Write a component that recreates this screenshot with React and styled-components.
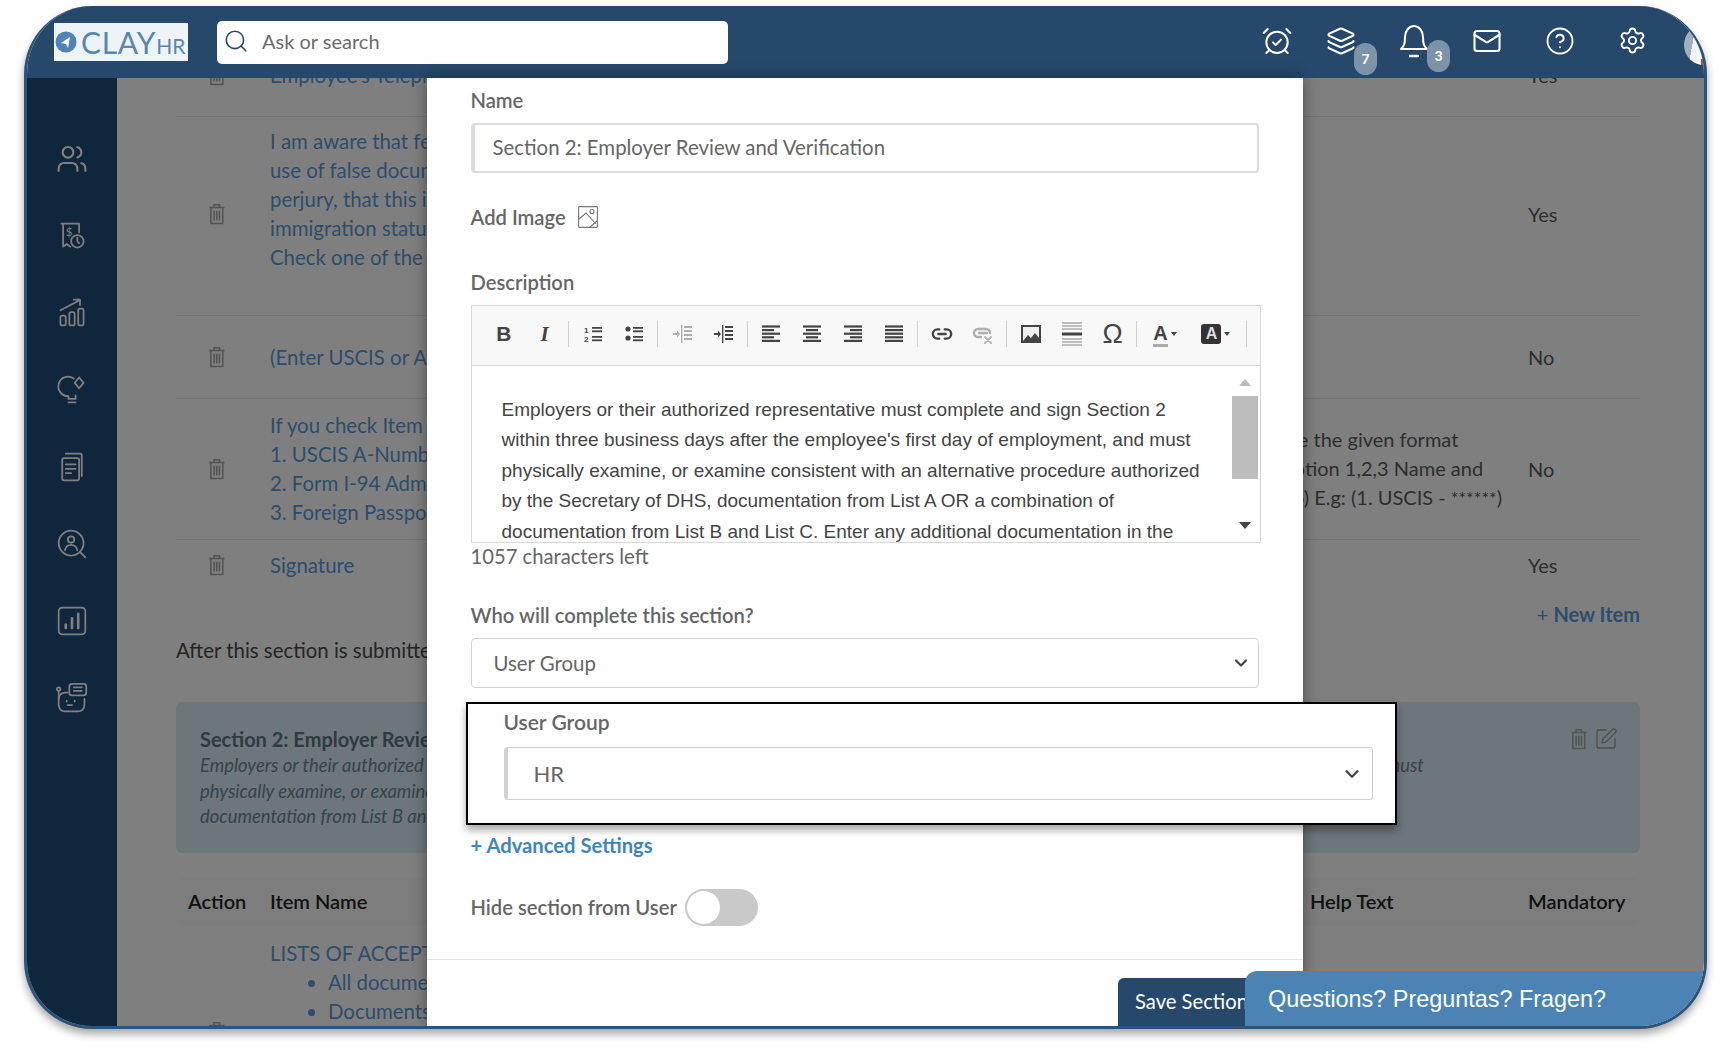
import React from "react"
import styled, { createGlobalStyle } from "styled-components"
import {
  AlarmClockCheck,
  ChevronDown,
  CircleHelp,
  Layers,
  Link2,
  Mail,
  Search,
  Settings,
  SquarePen,
  Users,
} from "lucide-react"

const GlobalStyle = createGlobalStyle`
  html, body {
    margin: 0;
    padding: 0;
    height: 100%;
    background: #fff;
    font-family: "Lato", "Open Sans", sans-serif;
  }
  * { box-sizing: border-box; }
`

const Page = styled.div`
  width: 1730px;
  height: 1046px;
  padding: 6px 23px 17px 24px;
  overflow: hidden;
`

const Frame = styled.div`
  height: 100%;
  display: flex;
  flex-direction: column;
  border: 3px solid #2d5379;
  border-top-width: 0;
  border-radius: 68px;
  background: #fff;
  overflow: hidden;
  position: relative;
  box-shadow: 0 5px 8px rgba(0, 0, 0, 0.35);
`

const TopBar = styled.header`
  flex: 0 0 72px;
  display: flex;
  align-items: center;
  background: #26486b;
  padding-left: 27px;
  color: #fff;
`

const Logo = styled.div`
  width: 134px;
  height: 38px;
  background: #eef3f7;
  display: flex;
  align-items: center;
  padding-left: 1px;
  color: #5787ae;
`

const LogoWord = styled.span`
  font-size: 30px;
  font-weight: 400;
  margin-left: 4px;
  letter-spacing: 0.7px;
`

const LogoSuffix = styled.span`
  font-size: 21px;
  margin-top: 7px;
`

const SearchBox = styled.div`
  width: 511px;
  height: 43px;
  margin-left: 29px;
  background: #fff;
  border-radius: 5px;
  display: flex;
  align-items: center;
  gap: 13px;
  padding-left: 6px;
  padding-bottom: 2px;
  color: #6b6b6b;
  font-size: 20px;
`

const TopIcons = styled.div`
  display: flex;
  margin-left: auto;
  margin-right: 11px;
  align-items: center;
`

const TopIcon = styled.div`
  position: relative;
  width: 73px;
  margin-right: ${(p) => p.$pull || 0}px;
  display: flex;
  justify-content: center;
  margin-top: -3px;
`

const Badge = styled.span`
  position: absolute;
  left: 50px;
  top: 17px;
  width: 23px;
  height: 32px;
  border-radius: 12px;
  background: #7d93a9;
  color: #fff;
  font-size: 14px;
  font-weight: 700;
  display: flex;
  align-items: center;
  justify-content: center;
`

const Avatar = styled.div`
  width: 40px;
  height: 40px;
  margin-left: 15px;
  margin-right: -31px;
  border-radius: 50%;
  background: linear-gradient(100deg, #9fb0c0 0 25%, #f4f4f4 25% 50%, #c9491c 50%);
  margin-top: 6px;
`

const Body = styled.div`
  flex: 1;
  min-height: 0;
  display: flex;
  position: relative;
`

const Sidebar = styled.nav`
  flex: 0 0 90px;
  background: #204c78;
  padding-top: 42px;
  display: flex;
  flex-direction: column;
  align-items: center;
  padding-right: 1px;
`

const SideItem = styled.div`
  height: 77px;
  display: flex;
  align-items: center;
  justify-content: center;
  color: #fff;
`

const Content = styled.main`
  flex: 1;
  min-width: 0;
  overflow: hidden;
  padding: 0 64px 0 59px;
  background: #fff;
  font-size: 20px;
  line-height: 29px;
  color: #5c5c5c;
`

const ScrollInner = styled.div`
  margin-top: -44px;
`

const Row = styled.div`
  display: grid;
  grid-template-columns: 94px 1008px 250px 112px;
  align-items: center;
  min-height: ${(p) => p.$height}px;
  padding-bottom: ${(p) => p.$lift || 0}px;
  border-bottom: ${(p) => (p.$plain ? "0" : "1px solid #e6e6e6")};
`

const ActionCell = styled.div`
  width: 82px;
  display: flex;
  justify-content: center;
`

const NameCell = styled.div`
  color: #5a9bd8;
  font-size: 20.4px;
  white-space: nowrap;
  align-self: ${(p) => (p.$top ? "start" : "auto")};
  padding-top: ${(p) => (p.$top ? 14 : 0)}px;
`

const HelpCell = styled.div`
  white-space: nowrap;
  color: #5c5c5c;
`

const Stars = styled.span`
  font-size: 18px;
`

const Line = styled.div``

const NewItem = styled.div`
  margin-top: 10px;
  text-align: right;
  color: #5a9bd8;
  font-weight: 700;

  span {
    font-weight: 400;
  }
`

const AfterText = styled.div`
  margin-top: 7px;
  font-size: 20.4px;
  color: #4a4a4a;
  white-space: nowrap;
`

const SectionCard = styled.section`
  position: relative;
  margin-top: 37px;
  height: 151px;
  background: #d9edf7;
  border-radius: 6px;
  padding: 23px 24px;
  overflow: hidden;
`

const CardTitle = styled.div`
  font-weight: 700;
  font-size: 20px;
  line-height: 28px;
  color: #5f7682;
`

const CardText = styled.div`
  font-style: italic;
  font-size: 18.45px;
  line-height: 25.5px;
  color: #6f8794;
  white-space: nowrap;
`

const CardTools = styled.div`
  position: absolute;
  top: 25px;
  right: 22px;
  display: flex;
  gap: 6px;
  align-items: center;
  color: #9a9a9a;
`

const TableHead = styled.div`
  display: grid;
  grid-template-columns: 94px 1008px 250px 112px;
  align-items: center;
  height: 47px;
  margin-top: 25px;
  padding-left: 12px;
  border-radius: 6px;
  background: #fbfbfb;
  font-weight: 600;
  color: #222;
`

const HeadName = styled.div`
  margin-left: -12px;
`

const HeadHelp = styled.div`
  margin-left: 20px;
`

const HeadMandatory = styled.div`
  margin-left: -12px;
  white-space: nowrap;
`

const Bullets = styled.ul`
  margin: 0;
  padding-left: 58px;
`

const Backdrop = styled.div`
  position: absolute;
  inset: 0;
  padding-right: 2px;
  background: rgba(0, 0, 0, 0.5);
  display: flex;
  justify-content: center;
`

const Modal = styled.div`
  width: 876px;
  height: 100%;
  background: #fff;
  padding: 8px 44px 0;
  box-shadow: 0 0 14px rgba(0, 0, 0, 0.4);
  color: #666;
  font-size: 20.2px;
  line-height: 28px;
`

const Label = styled.div`
  font-weight: 600;
  margin-top: ${(p) => p.$top || 0}px;
  color: #666;
`

const AddImageRow = styled.div`
  display: flex;
  align-items: center;
  gap: 12px;
  margin-top: 30px;
  font-weight: 600;
`

const TextInput = styled.input`
  display: block;
  width: 100%;
  height: 50px;
  margin-top: 9px;
  padding: 0 16px 2px 18px;
  border: 2px solid #dcdcdc;
  border-left-width: 4px;
  border-radius: 4px;
  font: 20.4px "Lato", sans-serif;
  color: #666;
  background: #fff;
  outline: none;
`

const Editor = styled.div`
  width: 790px;
  height: 238px;
  margin-top: 9px;
  border: 1px solid #d8d8d8;
  display: flex;
  flex-direction: column;
`

const Toolbar = styled.div`
  flex: 0 0 60px;
  display: flex;
  align-items: center;
  padding: 0 0 3px 12px;
  background: #f8f8f8;
  border-bottom: 1px solid #d8d8d8;
  color: #444;
`

const ToolButton = styled.div`
  flex: 0 0 ${(p) => p.$width || 40.8}px;
  display: flex;
  align-items: center;
  justify-content: center;
  gap: 3px;
  opacity: ${(p) => (p.$off ? 0.4 : 1)};
`

const ToolSep = styled.span`
  flex: 0 0 1px;
  height: 26px;
  margin: 0 3.25px;
  background: #cfcfcf;
`

const ToolLetter = styled.span`
  font: ${(p) => (p.$serif ? 'italic 700 21px "Liberation Serif", serif' : '700 21px "Liberation Sans", sans-serif')};
  color: #444;
`

const OmegaLetter = styled.span`
  font: 400 27px "Liberation Sans", sans-serif;
  color: #444;
`

const ColorLetter = styled.span`
  font: 700 20px/22px "Liberation Sans", sans-serif;
  color: #444;
  border-bottom: 3px solid #aaa;
`

const FillLetter = styled.span`
  width: 20px;
  height: 20px;
  border-radius: 3px;
  background: #333;
  color: #ddd;
  font: 700 16px/20px "Liberation Sans", sans-serif;
  text-align: center;
`

const Caret = styled.span`
  width: 0;
  height: 0;
  border: 3px solid transparent;
  border-top: 4px solid #444;
  border-bottom: 0;
`

const EditorBody = styled.div`
  flex: 1;
  min-height: 0;
  display: flex;
`

const EditorText = styled.div`
  flex: 1;
  overflow: hidden;
  padding: 29px 0 0 30px;
  font: 19px/30.4px "Liberation Sans", sans-serif;
  color: #444;
  white-space: nowrap;
`

const ScrollTrack = styled.div`
  flex: 0 0 30px;
  display: flex;
  flex-direction: column;
  align-items: center;
  padding-top: 13px;
`

const ScrollArrow = styled.span`
  width: 0;
  height: 0;
  border-left: 6px solid transparent;
  border-right: 6px solid transparent;
  border-bottom: ${(p) => (p.$down ? "0" : "7px solid #bbb")};
  border-top: ${(p) => (p.$down ? "7px solid #444" : "0")};
`

const ScrollThumb = styled.span`
  width: 26px;
  height: 83px;
  margin: 10px 0 43px;
  background: #bdbdbd;
`

const CharsLeft = styled.div`
  margin-top: -1px;
`

const SelectWrap = styled.div`
  position: relative;
  margin-top: ${(p) => p.$top}px;
  color: #444;

  svg {
    position: absolute;
    right: ${(p) => p.$arrow}px;
    top: 50%;
    transform: translateY(-50%);
    pointer-events: none;
  }
`

const Select = styled.select`
  display: block;
  width: 100%;
  height: ${(p) => p.$height}px;
  appearance: none;
  background: #fff;
  border: 1px solid #d2d2d2;
  border-left-width: ${(p) => (p.$thick ? 4 : 1)}px;
  border-radius: 4px;
  padding: 0 0 0 ${(p) => p.$pad}px;
  font: ${(p) => p.$size}px "Lato", sans-serif;
  color: #666;
  outline: none;
`

const Callout = styled.div`
  width: 931px;
  margin: 14px 0 0 -5px;
  padding: 4px 22px 23px 36px;
  position: relative;
  background: #fff;
  border: 2px solid #000;
  box-shadow: 0 5px 8px rgba(0, 0, 0, 0.35);
`

const CalloutLabel = styled.div`
  font-size: 21px;
  font-weight: 600;
  color: #666;
`

const AdvancedLink = styled.div`
  margin-top: 6px;
  color: #3c86bd;
  font-weight: 700;
`

const ToggleRow = styled.div`
  display: flex;
  align-items: center;
  gap: 8px;
  height: 37px;
  margin-top: 30px;
  font-weight: 600;
`

const ToggleText = styled.span`
  padding-bottom: 2px;
`

const Toggle = styled.div`
  width: 73px;
  height: 37px;
  border-radius: 19px;
  background: #c9c9c9;
  padding: 2px;
`

const Knob = styled.div`
  width: 33px;
  height: 33px;
  border-radius: 50%;
  background: #fff;
`

const ModalFooter = styled.div`
  margin: 33px -44px 0;
  padding: 18px 37px 0 0;
  display: flex;
  justify-content: flex-end;
  border-top: 1px solid #e5e5e5;
`

const SaveButton = styled.div`
  width: 148px;
  height: 60px;
  padding-top: 9px;
  text-align: center;
  background: #26486b;
  color: #fff;
  border-radius: 6px;
  white-space: nowrap;
`

const ChatTab = styled.div`
  position: absolute;
  right: 0;
  bottom: 0;
  width: 459px;
  height: 55px;
  padding: 2px 0 0 23px;
  display: flex;
  align-items: center;
  background: #4b84b4;
  border-top-left-radius: 12px;
  color: #fff;
  font: 23.4px "Liberation Sans", sans-serif;
  white-space: nowrap;
`

const Trash = ({ size = 22 }) => (
  <svg width={size * 0.8} height={size} viewBox="0 0 16 20" fill="none" stroke="#a8a8a8" strokeWidth="1.4">
    <path d="M1 4h14M5.5 4V1.6h5V4M2.6 4v14.6h10.8V4M5.6 7v9M8 7v9M10.4 7v9" />
  </svg>
)

const SideIcon = ({ children }) => (
  <svg width="32" height="32" viewBox="0 0 36 36" fill="none" stroke="currentColor" strokeWidth="2" strokeLinecap="round" strokeLinejoin="round">
    {children}
  </svg>
)

const sideIcons = [
  <Users key="users" size={32} strokeWidth={1.6} />,
  <SideIcon key="pay">
    <path d="M6 4h20M8 4v26l4-3 4 3M26 4v10" />
    <text x="11" y="18" fontSize="13" fill="currentColor" stroke="none" fontFamily="Lato">$</text>
    <circle cx="24" cy="24" r="7" />
    <path d="M24 20v4l2 2" />
  </SideIcon>,
  <SideIcon key="growth">
    <rect x="5" y="21" width="6" height="11" rx="2" />
    <rect x="15" y="17" width="6" height="15" rx="2" />
    <rect x="25" y="13" width="6" height="19" rx="2" />
    <path d="M5 15 26 4M20 3h7v6" />
  </SideIcon>,
  <SideIcon key="idea">
    <path d="M20 5a11 11 0 1 0-6 20v3h8v-4" />
    <path d="M14 32h8" />
    <path d="M26 4l5 6-5 6-5-6z" />
  </SideIcon>,
  <SideIcon key="docs">
    <rect x="7" y="8" width="19" height="25" rx="2" />
    <path d="M11 3h16a2 2 0 0 1 2 2v23" />
    <path d="M11 15h11M11 20h11M11 25h6" />
  </SideIcon>,
  <SideIcon key="find">
    <circle cx="17" cy="17" r="14" />
    <circle cx="17" cy="13" r="3.6" />
    <path d="M10 25c1-4 4-6 7-6s6 2 7 6M27 27l6 6" />
  </SideIcon>,
  <SideIcon key="report">
    <rect x="3" y="3" width="30" height="30" rx="4" />
    <path d="M11 26v-4M18 26V15M25 26V10" strokeWidth="3" />
  </SideIcon>,
  <SideIcon key="bot">
    <rect x="15" y="2" width="19" height="13" rx="3" />
    <path d="M20 6h9M20 10h9" />
    <path d="M13 12H10a7 7 0 0 0-7 7v7a7 7 0 0 0 7 7h15a7 7 0 0 0 7-7v-7" />
    <path d="M13 26h5M12 21v1M21 21v1" />
    <circle cx="3" cy="8" r="2" />
    <path d="M3 10v9" />
  </SideIcon>,
]

const AlignGlyph = ({ mode }) => {
  const lines = [16, 10, 16, 10, 16]
  return (
    <svg width="18" height="18" viewBox="0 0 18 18" fill="#444">
      {lines.map((w, i) => {
        const width = mode === "justify" ? 18 : w + 2
        const x = mode === "left" || mode === "justify" ? 0 : mode === "center" ? (18 - width) / 2 : 18 - width
        return <rect key={i} x={x} y={i * 3.6 + 0.4} width={width} height="2.2" />
      })}
    </svg>
  )
}

const ListGlyph = ({ ordered }) => (
  <svg width="18" height="18" viewBox="0 0 18 18" fill="#444">
    {ordered ? (
      <>
        <text x="0" y="8" fontSize="8" fontFamily="Liberation Sans" fontWeight="700">1</text>
        <text x="0" y="17" fontSize="8" fontFamily="Liberation Sans" fontWeight="700">2</text>
      </>
    ) : (
      <>
        <circle cx="3" cy="4" r="2.6" />
        <circle cx="3" cy="13" r="2.6" />
      </>
    )}
    <rect x="8" y="2" width="10" height="1.8" />
    <rect x="8" y="5.4" width="10" height="1.8" />
    <rect x="8" y="11" width="10" height="1.8" />
    <rect x="8" y="14.4" width="10" height="1.8" />
  </svg>
)

const IndentGlyph = () => (
  <svg width="20" height="20" viewBox="0 0 20 20" fill="#444">
    <rect x="9" y="1" width="1.4" height="18" />
    <rect x="12" y="2" width="8" height="2" />
    <rect x="12" y="6" width="8" height="2" />
    <rect x="12" y="10" width="8" height="2" />
    <rect x="12" y="14" width="8" height="2" />
    <path d="M1 9h4V6.5L8 10l-3 3.5V11H1z" />
  </svg>
)

const UnlinkGlyph = () => (
  <svg width="22" height="22" viewBox="0 0 22 22" fill="none" stroke="#444" strokeWidth="2.4" strokeLinecap="round">
    <path d="M9 14H6a4 4 0 0 1 0-8h8a4 4 0 0 1 4 4M7 10h8" />
    <path d="M13 14l6 6M19 14l-6 6" strokeWidth="1.8" />
  </svg>
)

const ImageGlyph = () => (
  <svg width="20" height="18" viewBox="0 0 20 18">
    <rect x="0" y="0" width="20" height="18" fill="#444" />
    <rect x="2" y="2" width="16" height="14" fill="#eee" />
    <path d="M2 16l5-6 3 3 4-5 4 5v3z" fill="#444" />
  </svg>
)

const RuleGlyph = () => (
  <svg width="20" height="24" viewBox="0 0 20 24">
    <path d="M0 1h20M0 4h20M0 7h20M0 17h20M0 20h20M0 23h20" stroke="#aaa" strokeWidth="1.4" />
    <rect y="10.5" width="20" height="3" fill="#444" />
  </svg>
)

const PictureOutline = () => (
  <svg width="20" height="22" viewBox="0 0 20 22" fill="none" stroke="#777" strokeWidth="1.1">
    <rect x="0.6" y="0.6" width="18.8" height="20.8" rx="1" />
    <path d="M1 13l7-6 10 11M12 21l7-6" />
    <circle cx="14" cy="5.5" r="2" />
  </svg>
)

const BellGlyph = () => (
  <svg width="32" height="36" viewBox="0 0 32 36" fill="none" stroke="currentColor" strokeWidth="2" strokeLinecap="round" strokeLinejoin="round">
    <path d="M3 26c3-3 4-5 4-12 0-6 4-11 9-11s9 5 9 11c0 7 1 9 4 12z" />
    <path d="M12 33h8" strokeWidth="2.4" />
  </svg>
)

const IconRow = () => (
  <TopIcons>
    <TopIcon $pull={-9}>
      <AlarmClockCheck size={32} strokeWidth={1.5} />
    </TopIcon>
    <TopIcon>
      <Layers size={30} strokeWidth={1.7} />
      <Badge>7</Badge>
    </TopIcon>
    <TopIcon>
      <BellGlyph />
      <Badge>3</Badge>
    </TopIcon>
    <TopIcon>
      <Mail size={30} strokeWidth={1.7} />
    </TopIcon>
    <TopIcon>
      <CircleHelp size={30} strokeWidth={1.5} />
    </TopIcon>
    <TopIcon>
      <Settings size={29} strokeWidth={1.6} />
    </TopIcon>
    <Avatar />
  </TopIcons>
)

const EditorToolbar = () => (
  <Toolbar>
    <ToolButton><ToolLetter>B</ToolLetter></ToolButton>
    <ToolButton><ToolLetter $serif>I</ToolLetter></ToolButton>
    <ToolSep />
    <ToolButton><ListGlyph ordered /></ToolButton>
    <ToolButton><ListGlyph /></ToolButton>
    <ToolSep />
    <ToolButton $off><IndentGlyph /></ToolButton>
    <ToolButton><IndentGlyph /></ToolButton>
    <ToolSep />
    <ToolButton><AlignGlyph mode="left" /></ToolButton>
    <ToolButton><AlignGlyph mode="center" /></ToolButton>
    <ToolButton><AlignGlyph mode="right" /></ToolButton>
    <ToolButton><AlignGlyph mode="justify" /></ToolButton>
    <ToolSep />
    <ToolButton><Link2 size={22} strokeWidth={2.6} /></ToolButton>
    <ToolButton $off><UnlinkGlyph /></ToolButton>
    <ToolSep />
    <ToolButton><ImageGlyph /></ToolButton>
    <ToolButton><RuleGlyph /></ToolButton>
    <ToolButton><OmegaLetter>Ω</OmegaLetter></ToolButton>
    <ToolSep />
    <ToolButton $width={49}><ColorLetter>A</ColorLetter><Caret /></ToolButton>
    <ToolButton $width={53}><FillLetter>A</FillLetter><Caret /></ToolButton>
    <ToolSep />
  </Toolbar>
)

const App = () => (
  <>
    <GlobalStyle />
    <Page>
      <Frame>
        <TopBar>
          <Logo>
            <svg width="22" height="22" viewBox="0 0 22 22">
              <circle cx="11" cy="11" r="10.5" fill="#4f85b5" />
              <path d="M6 12l9-6-2 11-2-4z" fill="#fff" />
            </svg>
            <LogoWord>CLAY</LogoWord>
            <LogoSuffix>HR</LogoSuffix>
          </Logo>
          <SearchBox>
            <Search size={26} strokeWidth={1.5} color="#26486b" />
            Ask or search
          </SearchBox>
          <IconRow />
        </TopBar>
        <Body>
          <Sidebar>
            {sideIcons.map((icon) => (
              <SideItem key={icon.key}>{icon}</SideItem>
            ))}
          </Sidebar>
          <Content>
            <ScrollInner>
              <Row $height={83}>
                <ActionCell><Trash /></ActionCell>
                <NameCell>Employee's Telephone Number</NameCell>
                <HelpCell />
                <div>Yes</div>
              </Row>
              <Row $height={199} $lift={4}>
                <ActionCell><Trash /></ActionCell>
                <NameCell>
                  <Line>I am aware that federal law provides for imprisonment and/or fines for false statements or</Line>
                  <Line>use of false documents in connection with the completion of this form. I attest, under penalty of</Line>
                  <Line>perjury, that this information is true and correct.</Line>
                  <Line>immigration status</Line>
                  <Line>Check one of the following boxes</Line>
                  <Line>&nbsp;</Line>
                </NameCell>
                <HelpCell />
                <div>Yes</div>
              </Row>
              <Row $height={83}>
                <ActionCell><Trash /></ActionCell>
                <NameCell>(Enter USCIS or A-Number)</NameCell>
                <HelpCell />
                <div>No</div>
              </Row>
              <Row $height={141}>
                <ActionCell><Trash /></ActionCell>
                <NameCell>
                  <Line>If you check Item Number 3</Line>
                  <Line>1. USCIS A-Number</Line>
                  <Line>2. Form I-94 Admission Number</Line>
                  <Line>3. Foreign Passport Number</Line>
                </NameCell>
                <HelpCell>
                  <Line>use the given format</Line>
                  <Line>Option 1,2,3 Name and</Line>
                  <Line>No) E.g: (1. USCIS - <Stars>******</Stars>)</Line>
                </HelpCell>
                <div>No</div>
              </Row>
              <Row $height={50} $plain>
                <ActionCell><Trash /></ActionCell>
                <NameCell>Signature</NameCell>
                <HelpCell />
                <div>Yes</div>
              </Row>
              <NewItem><span>+ </span>New Item</NewItem>
              <AfterText>After this section is submitted, it will be sent to the next step</AfterText>
              <SectionCard>
                <CardTitle>Section 2: Employer Review and Verification</CardTitle>
                <CardText>Employers or their authorized representative must complete and sign Section 2 within three business days after the employee's first day of employment, and must</CardText>
                <CardText>physically examine, or examine consistent with an alternative procedure authorized by the Secretary of DHS, documentation from List A OR a combination of</CardText>
                <CardText>documentation from List B and List C.</CardText>
                <CardTools>
                  <Trash />
                  <SquarePen size={24} strokeWidth={1.3} />
                </CardTools>
              </SectionCard>
              <TableHead>
                <div>Action</div>
                <HeadName>Item Name</HeadName>
                <HeadHelp>Help Text</HeadHelp>
                <HeadMandatory>Mandatory</HeadMandatory>
              </TableHead>
              <Row $height={214} $plain>
                <ActionCell><Trash /></ActionCell>
                <NameCell $top>
                  <Line>LISTS OF ACCEPTABLE DOCUMENTS</Line>
                  <Bullets>
                    <li>All documents must be unexpired</li>
                    <li>Documents may be original</li>
                  </Bullets>
                </NameCell>
              </Row>
            </ScrollInner>
          </Content>
          <Backdrop>
            <Modal>
              <Label>Name</Label>
              <TextInput readOnly value="Section 2: Employer Review and Verification" />
              <AddImageRow>
                Add Image
                <PictureOutline />
              </AddImageRow>
              <Label $top={37}>Description</Label>
              <Editor>
                <EditorToolbar />
                <EditorBody>
                  <EditorText>
                    <Line>Employers or their authorized representative must complete and sign Section 2</Line>
                    <Line>within three business days after the employee's first day of employment, and must</Line>
                    <Line>physically examine, or examine consistent with an alternative procedure authorized</Line>
                    <Line>by the Secretary of DHS, documentation from List A OR a combination of</Line>
                    <Line>documentation from List B and List C. Enter any additional documentation in the</Line>
                  </EditorText>
                  <ScrollTrack>
                    <ScrollArrow />
                    <ScrollThumb />
                    <ScrollArrow $down />
                  </ScrollTrack>
                </EditorBody>
              </Editor>
              <CharsLeft>1057 characters left</CharsLeft>
              <Label $top={31}>Who will complete this section?</Label>
              <SelectWrap $top={9} $arrow={8}>
                <Select $height={50} $pad={22} $size={20.4} defaultValue="User Group">
                  <option>User Group</option>
                </Select>
                <ChevronDown size={20} strokeWidth={2.6} />
              </SelectWrap>
              <Callout>
                <CalloutLabel>User Group</CalloutLabel>
                <SelectWrap $top={11} $arrow={10}>
                  <Select $height={53} $pad={26} $size={22} $thick defaultValue="HR">
                    <option>HR</option>
                  </Select>
                  <ChevronDown size={22} strokeWidth={2.6} />
                </SelectWrap>
              </Callout>
              <AdvancedLink>+ Advanced Settings</AdvancedLink>
              <ToggleRow>
                <ToggleText>Hide section from User</ToggleText>
                <Toggle><Knob /></Toggle>
              </ToggleRow>
              <ModalFooter>
                <SaveButton>Save Section</SaveButton>
              </ModalFooter>
            </Modal>
          </Backdrop>
          <ChatTab>Questions? Preguntas? Fragen?</ChatTab>
        </Body>
      </Frame>
    </Page>
  </>
)

export default App
